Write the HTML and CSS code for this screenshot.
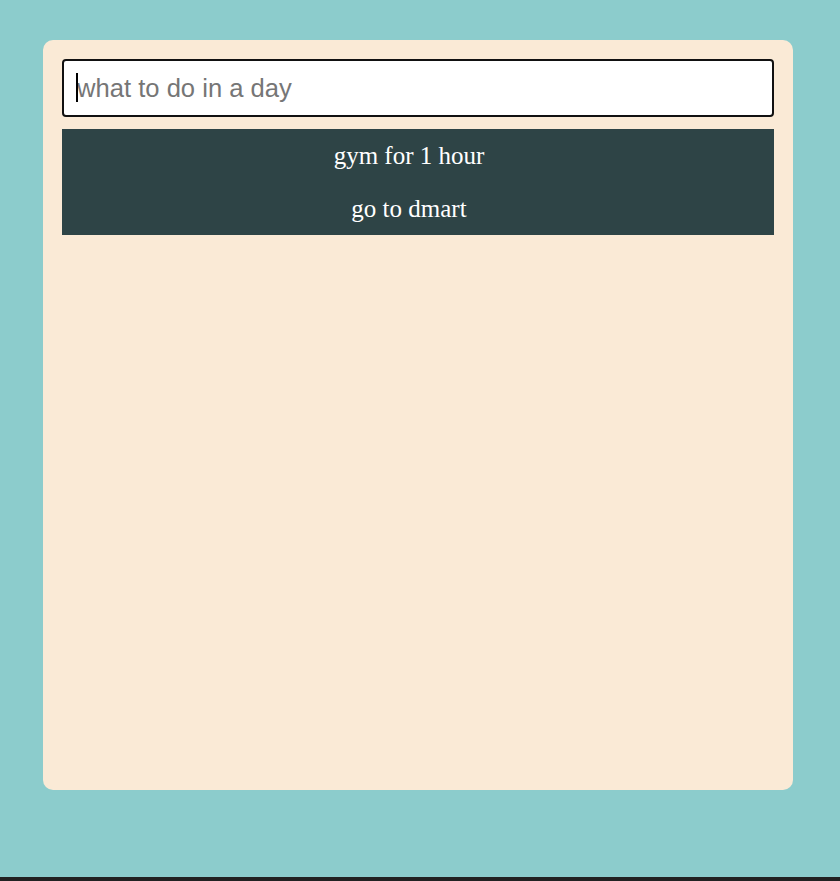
FILE: index.html
```html
<!DOCTYPE html>
<html>
<head>
<meta charset="utf-8">
<link rel="stylesheet" href="styles.css">
</head>
<body>
<div class="page">
  <div class="card">
    <div class="field">
      <input class="todo-input" type="text" placeholder="what to do in a day">
      <span class="caret"></span>
    </div>
    <ul class="list">
      <li class="item">gym for 1 hour</li>
      <li class="item">go to dmart</li>
    </ul>
  </div>
</div>
<div class="bottom-bar"></div>
</body>
</html>
```
FILE: styles.css
```css
html, body {
  margin: 0;
  padding: 0;
}
body {
  background: #8ccccc;
  height: 881px;
  display: flex;
  flex-direction: column;
  overflow: hidden;
}
.page {
  flex: 1;
  padding: 40px 0 0 43px;
}
.card {
  width: 750px;
  height: 750px;
  box-sizing: border-box;
  background: #faead6;
  border-radius: 10px;
  padding: 19px;
  display: flex;
  flex-direction: column;
  gap: 12px;
}
.field {
  position: relative;
}
.todo-input {
  display: block;
  width: 100%;
  height: 58px;
  box-sizing: border-box;
  border: 2px solid #111;
  border-radius: 4px;
  background: #fff;
  padding: 0 13px;
  font-family: "Liberation Sans", Arial, sans-serif;
  font-size: 25.6px;
  color: #222;
  outline: none;
}
.todo-input::placeholder {
  color: #767676;
}
.caret {
  position: absolute;
  left: 14px;
  top: 14px;
  width: 2px;
  height: 29px;
  background: #000;
}
.list {
  list-style: none;
  margin: 0;
  padding: 0;
  background: #2e4446;
}
.item {
  font-family: "Liberation Serif", "Times New Roman", serif;
  font-size: 25px;
  line-height: 29px;
  padding: 12px 18px 12px 0;
  color: #fff;
  text-align: center;
}
.bottom-bar {
  height: 4px;
  background: #212121;
}
```
